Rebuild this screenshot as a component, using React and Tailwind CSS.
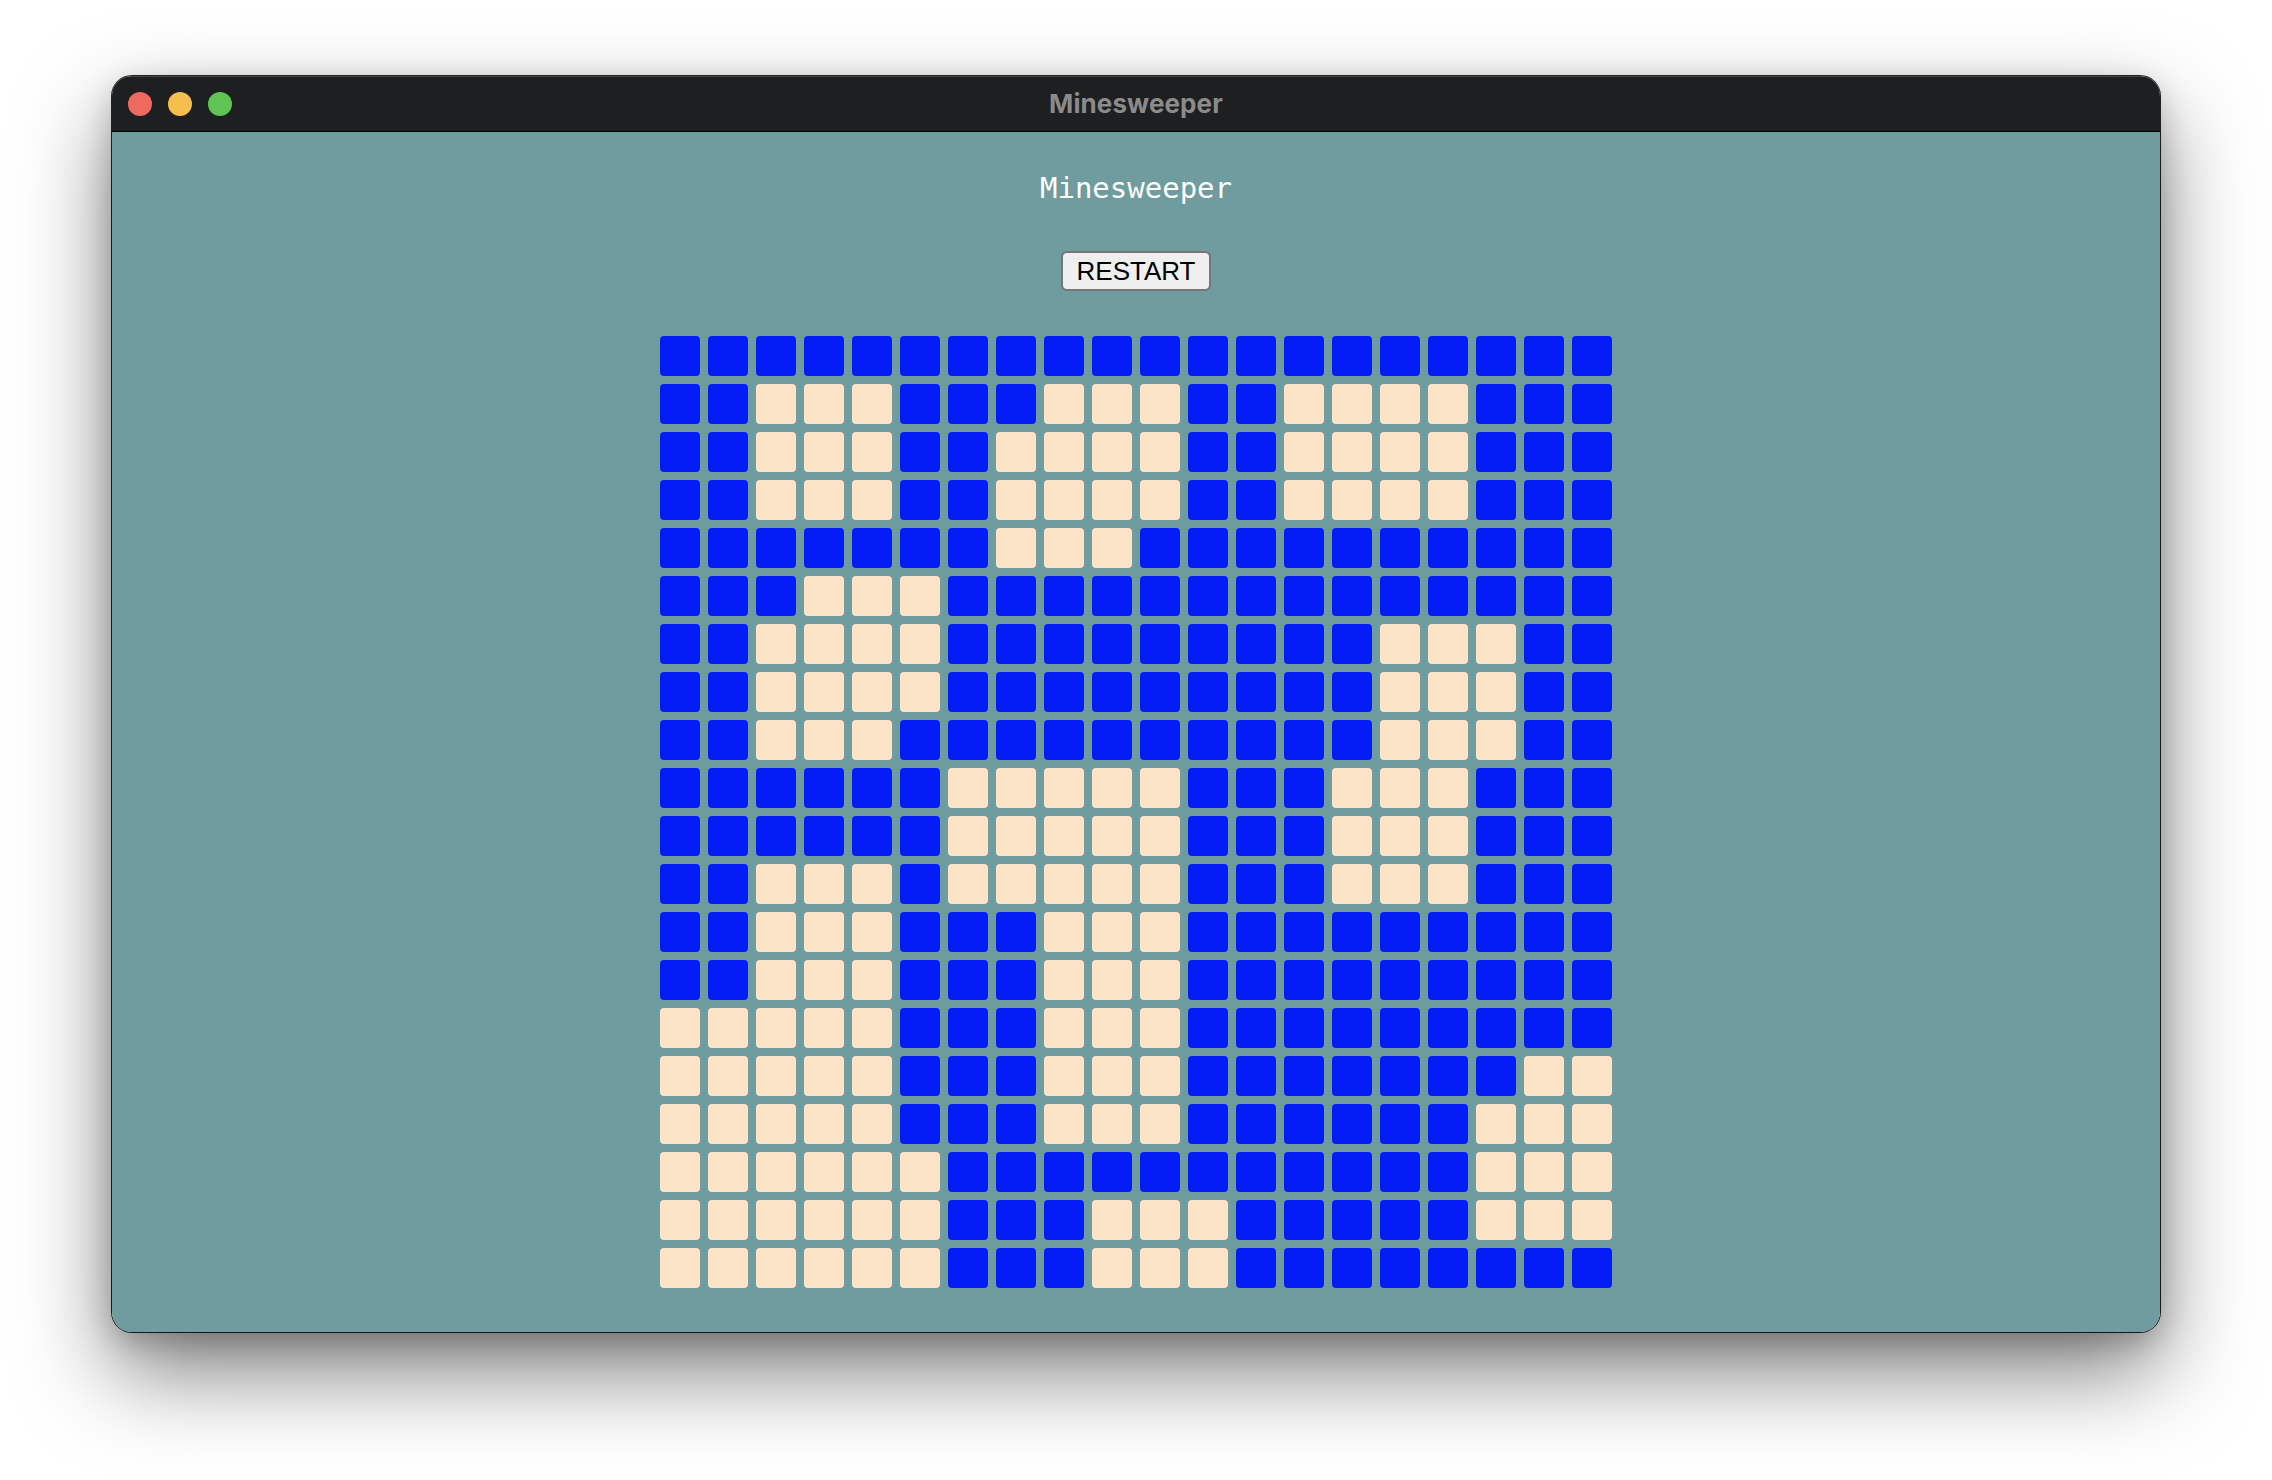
import React from "react";

const PATTERN = [
  "BBBBBBBBBBBBBBBBBBBB",
  "BBWWWBBBWWWBBWWWWBBB",
  "BBWWWBBWWWWBBWWWWBBB",
  "BBWWWBBWWWWBBWWWWBBB",
  "BBBBBBBWWWBBBBBBBBBB",
  "BBBWWWBBBBBBBBBBBBBB",
  "BBWWWWBBBBBBBBBWWWBB",
  "BBWWWWBBBBBBBBBWWWBB",
  "BBWWWBBBBBBBBBBWWWBB",
  "BBBBBBWWWWWBBBWWWBBB",
  "BBBBBBWWWWWBBBWWWBBB",
  "BBWWWBWWWWWBBBWWWBBB",
  "BBWWWBBBWWWBBBBBBBBB",
  "BBWWWBBBWWWBBBBBBBBB",
  "WWWWWBBBWWWBBBBBBBBB",
  "WWWWWBBBWWWBBBBBBBWW",
  "WWWWWBBBWWWBBBBBBWWW",
  "WWWWWWBBBBBBBBBBBWWW",
  "WWWWWWBBBWWWBBBBBWWW",
  "WWWWWWBBBWWWBBBBBBBB",
];

export default function App() {
  return (
    <div className="w-[2272px] h-[1480px] bg-white flex justify-center pt-[76px]">
      <div className="w-[2048px] h-[1256px] rounded-[20px] overflow-hidden flex flex-col shadow-[0_0_0_1px_rgba(0,0,0,0.85),0_40px_90px_rgba(0,0,0,0.5),0_10px_30px_rgba(0,0,0,0.2)]">
        <div className="relative h-[56px] bg-[#1e1f21] border-b border-black flex items-center shrink-0 shadow-[inset_0_1px_0_rgba(255,255,255,0.18)]">
          <div className="flex items-center gap-[16px] pl-[16px]">
            <div className="w-[24px] h-[24px] rounded-full bg-[#ee6a5f]" />
            <div className="w-[24px] h-[24px] rounded-full bg-[#f5be4f]" />
            <div className="w-[24px] h-[24px] rounded-full bg-[#5fc454]" />
          </div>
          <div className="absolute inset-0 flex items-center justify-center pointer-events-none">
            <span className="font-['Inter',sans-serif] font-bold text-[26px] text-[#8b8b8b] tracking-[0.1px]">
              Minesweeper
            </span>
          </div>
        </div>
        <div className="flex-1 bg-[#6f9c9e] flex flex-col items-center pt-[38px]">
          <h1 className="font-['DejaVu_Sans_Mono',monospace] text-[29px] leading-[36px] text-white">
            Minesweeper
          </h1>
          <button className="mt-[45px] w-[150px] h-[40px] bg-[#efefef] border-2 border-[#767676] rounded-[6px] font-['Liberation_Sans',Arial,sans-serif] text-[26px] leading-none text-black flex items-center justify-center">
            RESTART
          </button>
          <div className="mt-[45px] grid grid-cols-[repeat(20,40px)] gap-[8px]">
            {PATTERN.map((row, r) =>
              row.split("").map((c, i) => (
                <div
                  key={r + "-" + i}
                  className={
                    c === "B"
                      ? "w-[40px] h-[40px] rounded-[4px] bg-[#031bf5]"
                      : "w-[40px] h-[40px] rounded-[4px] bg-[#fce4c8]"
                  }
                />
              ))
            )}
          </div>
        </div>
      </div>
    </div>
  );
}
